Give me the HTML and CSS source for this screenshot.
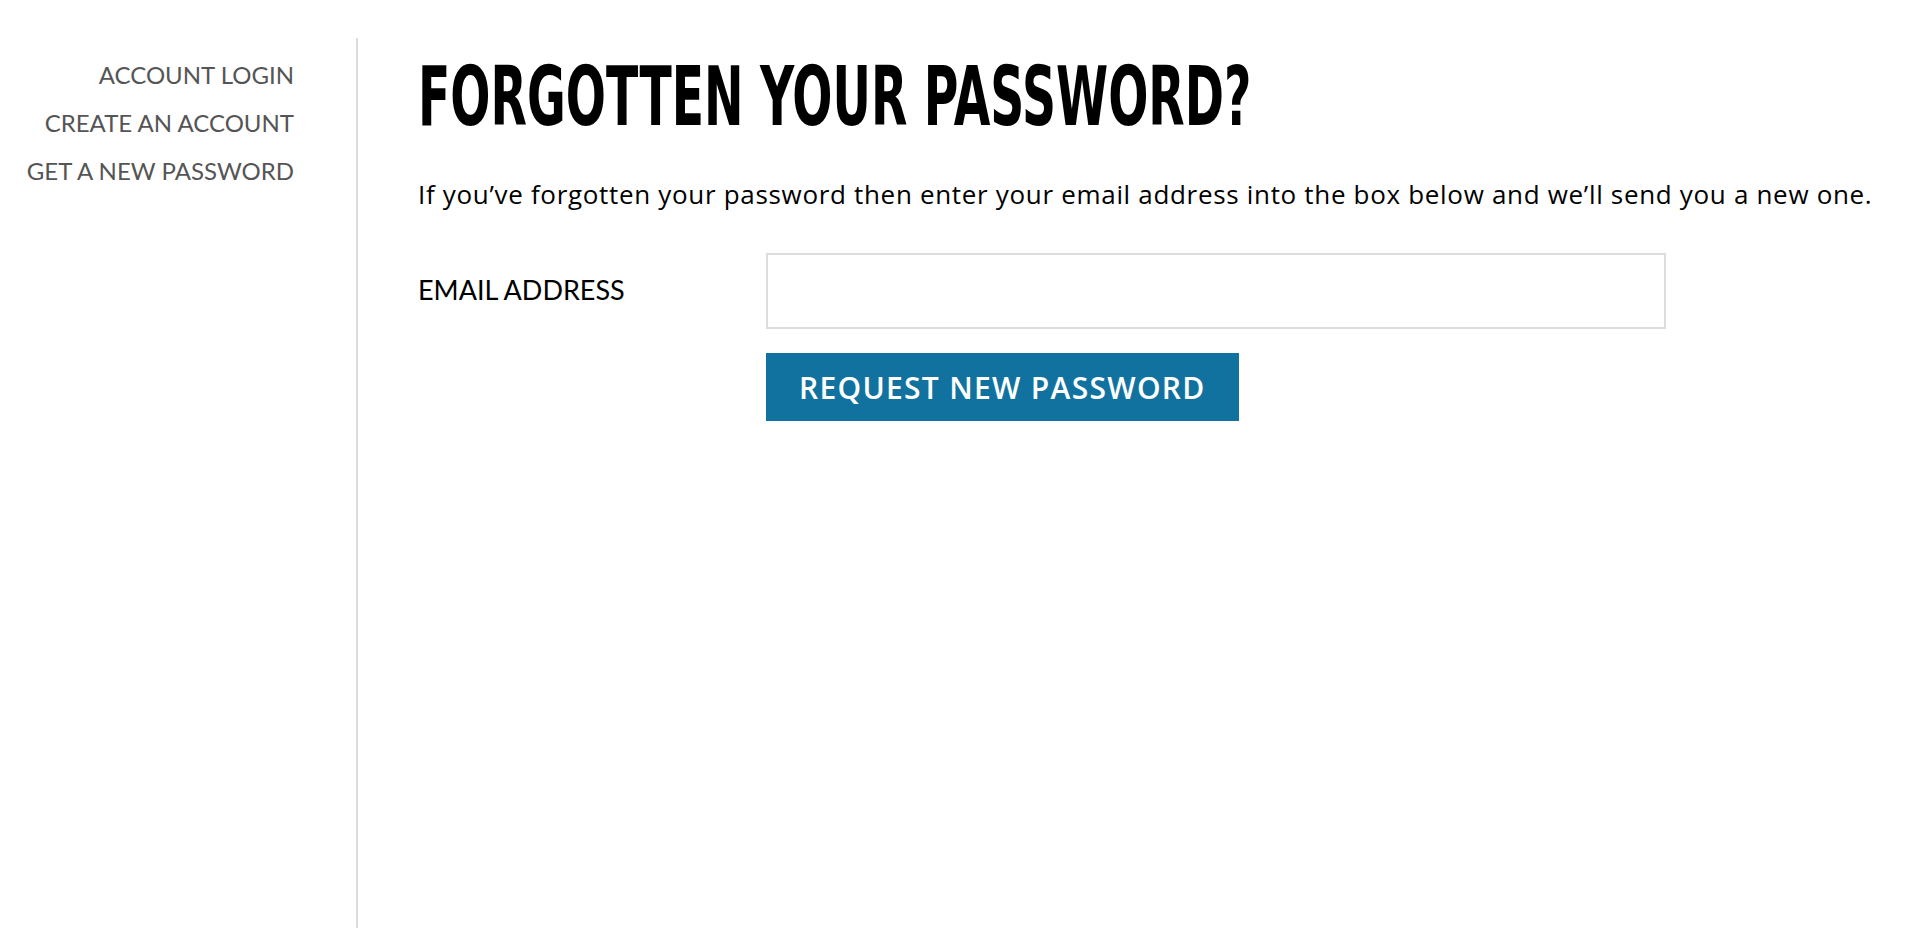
FILE: index.html
```html
<!DOCTYPE html>
<html>
<head>
    <title>Forgotten your password?</title>
    <link rel="stylesheet" href="styles.css">
</head>
<body>
    <div class="page">
        <div class="sidebar">
            <ul class="account-nav">
                <li><a href="#">Account Login</a></li>
                <li><a href="#">Create an Account</a></li>
                <li><a href="#">Get a New Password</a></li>
            </ul>
        </div>

        <div class="main">
            <h1 class="title"><span>Forgotten your password?</span></h1>
            <p class="intro">If you&rsquo;ve forgotten your password then enter your email address into the box below and we&rsquo;ll send you a new one.</p>

            <form class="reset-form" onsubmit="return false">
                <label for="email">Email Address</label>
                <input type="email" id="email" name="email">
                <div></div>
                <button type="submit">Request New Password</button>
            </form>
        </div>
    </div>
</body>
</html>
```

FILE: styles.css
```css
body {
    margin: 0;
    font-family: Lato, "Noto Sans", sans-serif;
    color: #000;
    background: #fff;
}

.page {
    display: flex;
    margin-top: 38px;
    min-height: 890px;
}

.sidebar {
    width: 294px;
    padding-right: 62px;
    border-right: 2px solid #dddddd;
    text-align: right;
}

.account-nav {
    list-style: none;
    margin: 0;
    padding: 13px 0 0;
}

.account-nav li {
    line-height: 48px;
    font-size: 24px;
}

.account-nav a {
    color: #555;
    text-decoration: none;
    text-transform: uppercase;
}

.main {
    padding-left: 60px;
}

.title {
    margin: 9px 0 0;
    height: 100px;
    font-family: "DejaVu Sans Condensed", "Liberation Sans Narrow", sans-serif;
    font-weight: bold;
    font-size: 82px;
    line-height: 100px;
    text-transform: uppercase;
    white-space: nowrap;
}

.title span {
    display: inline-block;
    transform: scaleX(0.641);
    transform-origin: left center;
}

.intro {
    margin: 29px 0 0;
    font-family: "Open Sans", Lato, sans-serif;
    font-size: 26px;
    line-height: 36px;
    letter-spacing: 0.68px;
    white-space: nowrap;
}

.reset-form {
    display: grid;
    grid-template-columns: 348px 900px;
    align-items: center;
    row-gap: 24px;
    margin-top: 41px;
}

.reset-form label {
    font-size: 27px;
    margin-top: -3px;
    text-transform: uppercase;
}

.reset-form input {
    box-sizing: border-box;
    height: 76px;
    border: 2px solid #dddddd;
    font-size: 24px;
    padding: 0 16px;
}

.reset-form button {
    justify-self: start;
    height: 68px;
    padding: 0 33px;
    border: none;
    background: #12729f;
    color: #fff;
    font-family: "Open Sans", Lato, sans-serif;
    font-weight: 600;
    font-size: 30px;
    letter-spacing: 1.3px;
    text-transform: uppercase;
    cursor: pointer;
}
```
